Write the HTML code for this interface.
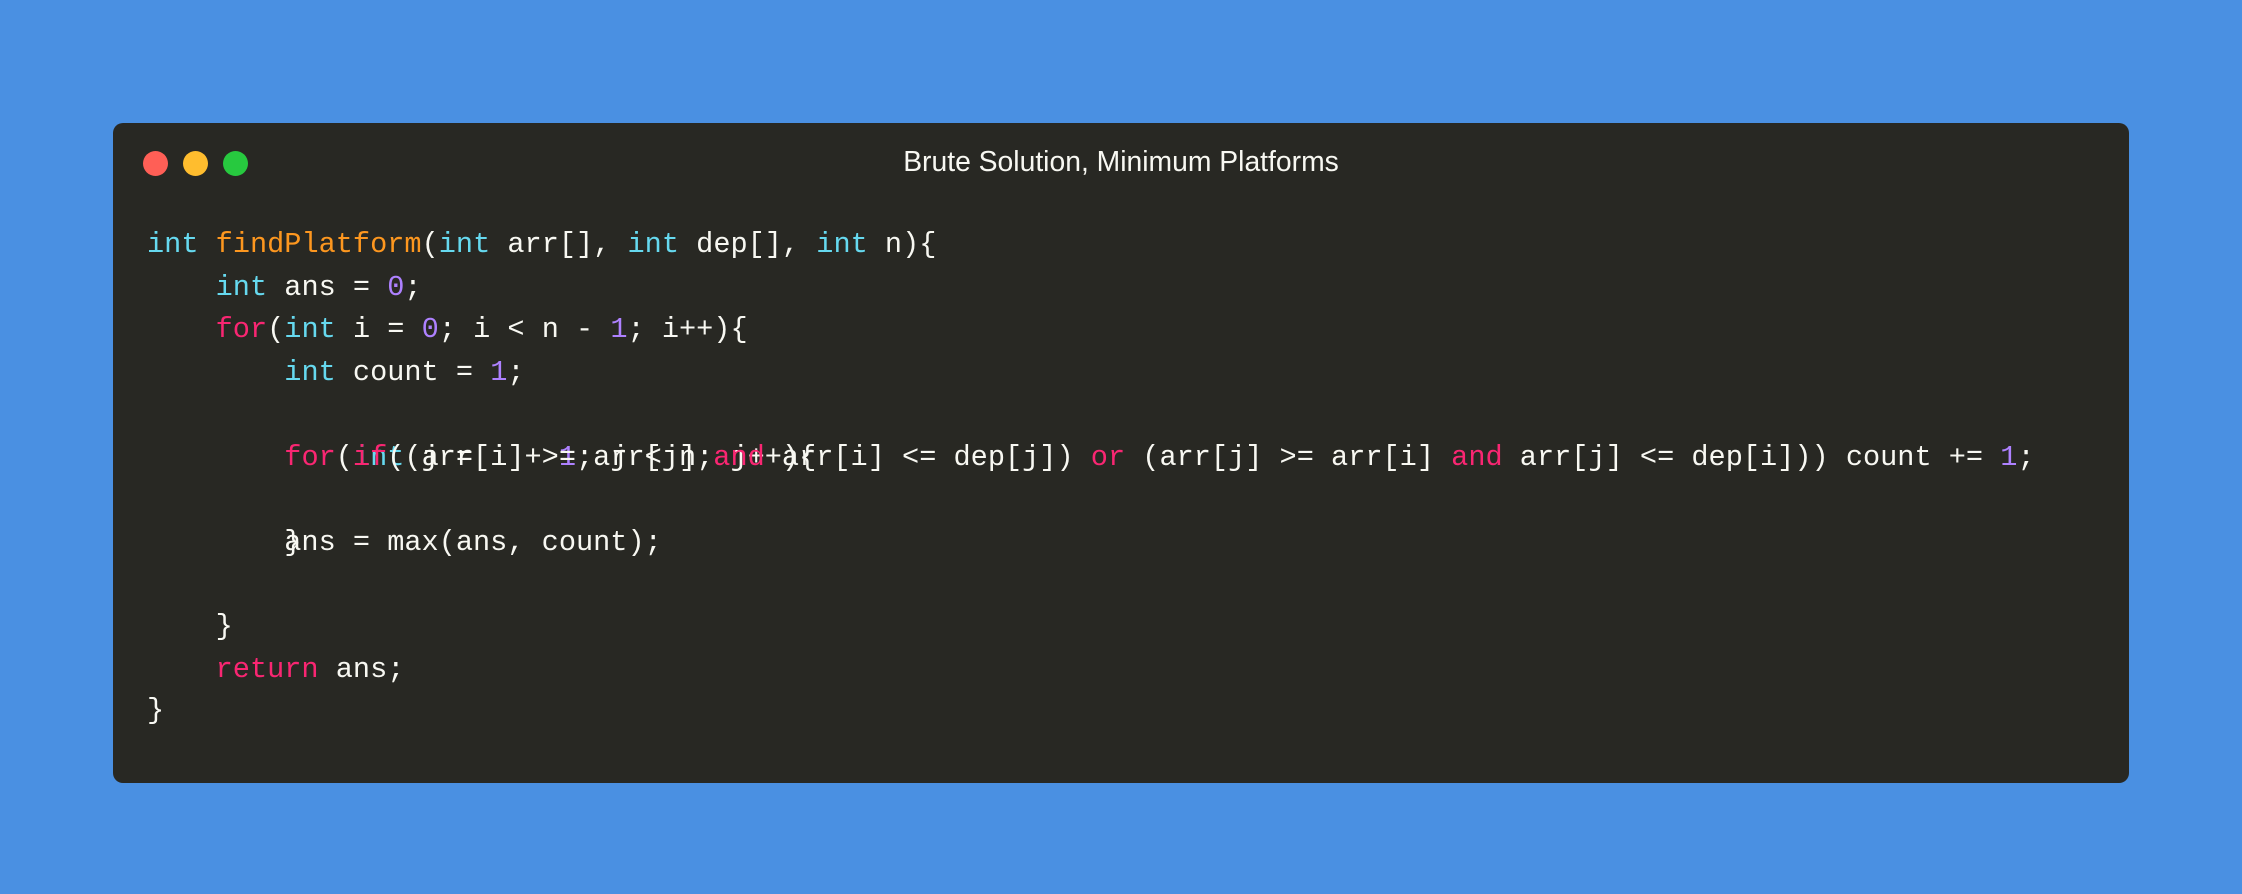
<!DOCTYPE html>
<html><head><meta charset="utf-8"><style>
html,body{margin:0;padding:0;}
body{width:2242px;height:894px;background:#4a90e2;position:relative;overflow:hidden;}
.win{position:absolute;left:113px;top:123px;width:2016px;height:660px;background:#282823;border-radius:10px;}
.dot{position:absolute;top:151px;width:25px;height:25px;border-radius:50%;}
.title{position:absolute;left:0;width:2242px;top:143px;text-align:center;font:28.3px "Liberation Sans",sans-serif;color:#f8f8f2;line-height:36px;}
.l{position:absolute;font:28.6px/42px "Liberation Mono",monospace;color:#f8f8f2;white-space:pre;}
.k{color:#66d9ef}.f{color:#fd971f}.p{color:#f92672}.n{color:#ae81ff}
</style></head><body>
<div class="win"></div>
<div class="dot" style="left:143px;background:#ff5f56"></div>
<div class="dot" style="left:183px;background:#ffbd2e"></div>
<div class="dot" style="left:223px;background:#27c93f"></div>
<div class="title">Brute Solution, Minimum Platforms</div>
<div class="l" style="left:147px;top:224px"><span class="k">int</span> <span class="f">findPlatform</span>(<span class="k">int</span> arr[], <span class="k">int</span> dep[], <span class="k">int</span> n){</div>
<div class="l" style="left:147px;top:266.5px">    <span class="k">int</span> ans = <span class="n">0</span>;</div>
<div class="l" style="left:147px;top:309px">    <span class="p">for</span>(<span class="k">int</span> i = <span class="n">0</span>; i &lt; n - <span class="n">1</span>; i++){</div>
<div class="l" style="left:147px;top:351.5px">        <span class="k">int</span> count = <span class="n">1</span>;</div>
<div class="l" style="left:147px;top:436.5px">        <span class="p">for</span>(<span class="k">int</span> j = i + <span class="n">1</span>; j &lt; n; j++){</div>
<div class="l" style="left:147px;top:436.5px">            <span class="p">if</span>((arr[i] &gt;= arr[j] <span class="p">and</span> arr[i] &lt;= dep[j]) <span class="p">or</span> (arr[j] &gt;= arr[i] <span class="p">and</span> arr[j] &lt;= dep[i])) count += <span class="n">1</span>;</div>
<div class="l" style="left:147px;top:521.5px">        }</div>
<div class="l" style="left:147px;top:521.5px">        ans = max(ans, count);</div>
<div class="l" style="left:147px;top:606px">    }</div>
<div class="l" style="left:147px;top:648.5px">    <span class="p">return</span> ans;</div>
<div class="l" style="left:147px;top:690px">}</div>
</body></html>
